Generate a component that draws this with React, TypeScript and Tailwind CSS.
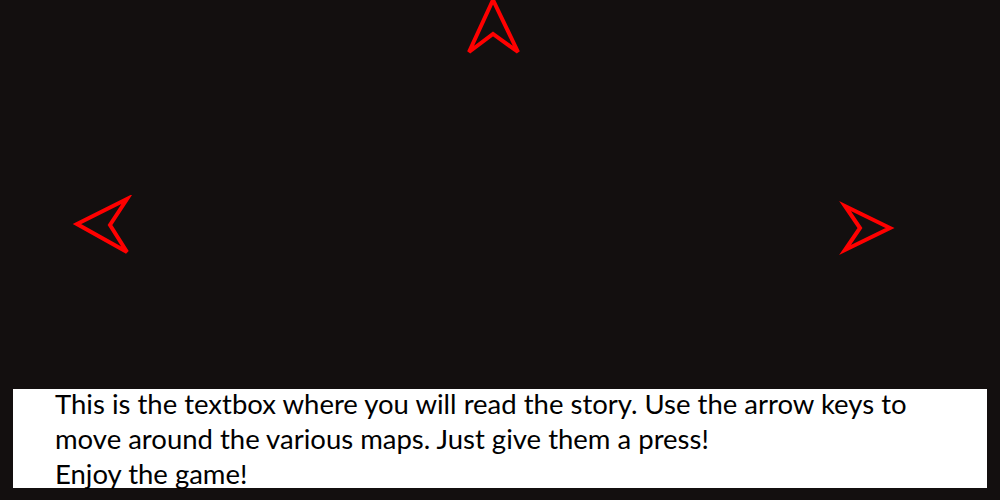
import * as React from 'react'

// Arrow markers drawn as open chevron outlines
function Arrow({ points, className }: { points: string; className: string }) {
  return (
    <svg className={className} viewBox="0 0 60 60" width="60" height="60" fill="none">
      <polygon points={points} stroke="#ff0000" strokeWidth="4" strokeLinejoin="miter" />
    </svg>
  )
}

export default function App() {
  return (
    <div className="relative flex h-[500px] w-[1000px] flex-col bg-[#130f0f] overflow-hidden">
      {/* Up */}
      <Arrow className="absolute left-[464px] top-[-3px]" points="29,3 5,55 29,37 54,55" />
      {/* Left */}
      <Arrow className="absolute left-[72px] top-[195px]" points="5,29 55,4 38,30 55,57" />
      {/* Right */}
      <Arrow className="absolute left-[837px] top-[199px]" points="53,29 8,7 23,29 8,51" />

      {/* Story textbox */}
      <div className="mx-[13px] mb-[12px] mt-auto h-[99px] bg-white pl-[42px]">
        <p
          className="-mt-[3px] text-[27.5px] leading-[35px] text-black"
          style={{ fontFamily: 'Lato, "Open Sans", sans-serif' }}
        >
          This is the textbox where you will read the story. Use the arrow keys to
          <br />
          move around the various maps. Just give them a press!
          <br />
          Enjoy the game!
        </p>
      </div>
    </div>
  )
}
